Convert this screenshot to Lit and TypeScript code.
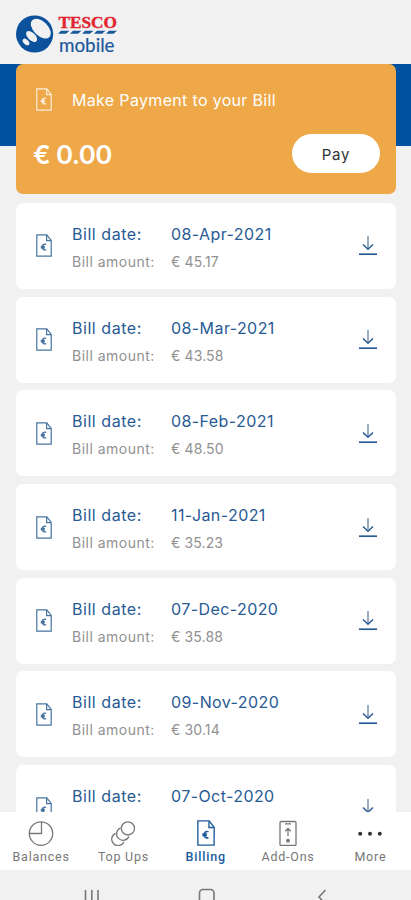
import { LitElement, html, svg, css, nothing } from "lit";
import { customElement, property } from "lit/decorators.js";

@customElement("bill-icon")
class BillIcon extends LitElement {
  static styles = css`
    :host { display: block; width: 16px; height: 23px; }
    svg { display: block; width: 100%; height: 100%; }
  `;
  render() {
    return html`<svg viewBox="0 0 16 23" fill="none" stroke="currentColor" stroke-width="1.2">
      <path d="M.8 .8H10.8L15.2 6.4V22.2H.8Z" />
      <path d="M10.6 1V6.6H15" />
      <path d="M10.2 10.4C7.8 9.6 6.3 11 6.3 13S7.8 16.4 10.2 15.6M4.8 12.4H8.8M4.8 13.7H8.8" stroke-width="1.4" />
    </svg>`;
  }
}

@customElement("bill-row")
class BillRow extends LitElement {
  @property() date = "";
  @property() amount = "";
  static styles = css`
    :host {
      display: grid; grid-template-columns: 56px 99px 1fr 18px; box-sizing: border-box;
      height: 86px; padding: 0 19px 0 0; align-items: center; flex: none;
      background: #fff; border-radius: 7px; color: #285b94;
    }
    .icon { margin-left: 20px; color: #47749f; }
    .col { display: flex; flex-direction: column; white-space: nowrap; height: 56px; padding-top: 4px; }
    .strong { font-size: 16px; line-height: 28px; letter-spacing: 0.42px; }
    .label { letter-spacing: 0.55px; }
    .soft { font-size: 14px; line-height: 28px; color: #919191; letter-spacing: 0.48px; }
    .amount { letter-spacing: 0.12px; }
    .download { display: block; width: 18px; height: 21px; }
  `;
  render() {
    return html`
      <bill-icon class="icon"></bill-icon>
      <div class="col">
        <span class="strong label">Bill date:</span>
        ${this.amount ? html`<span class="soft">Bill amount:</span>` : nothing}
      </div>
      <div class="col">
        <span class="strong">${this.date}</span>
        ${this.amount ? html`<span class="soft amount">€ ${this.amount}</span>` : nothing}
      </div>
      <svg class="download" viewBox="0 0 18 21" fill="none" stroke="currentColor">
        <path d="M9 1V14" stroke="#8199b2" stroke-width="1.6" />
        <path d="M4 9.5L9 14.2L14 9.5" stroke-width="1.5" />
        <path d="M0 19.2H18" stroke-width="1.7" />
      </svg>`;
  }
}

const bills = [
  ["08-Apr-2021", "45.17"], ["08-Mar-2021", "43.58"], ["08-Feb-2021", "48.50"],
  ["11-Jan-2021", "35.23"], ["07-Dec-2020", "35.88"], ["09-Nov-2020", "30.14"],
  ["07-Oct-2020", ""],
];

const balances = svg`<circle cx="13" cy="13.6" r="11.7" /><path d="M13.500 2V13.500H1.500" />`;
const topUps = svg`<circle cx="17.9" cy="8.4" r="6.6" />
  <path d="M10.5 8A6.4 6.4 0 1 0 18.9 16.4M5.600 13.300A6.400 6.400 0 1 0 14 21.700" />`;
const addOns = svg`<rect x="5" y="1.500" width="16" height="24" rx="1" />
  <path d="M10 3.900H16M13 16V8.500M10.200 11.300L13 8.500L15.800 11.300" /><circle cx="13" cy="20.800" r="1.300" fill="currentColor" />`;
const more = svg`<g fill="currentColor" stroke="none"><circle cx="3.2" cy="13.700" r="2" /><circle cx="13" cy="13.700" r="2" /><circle cx="22.8" cy="13.700" r="2" /></g>`;

@customElement("app-root")
class AppRoot extends LitElement {
  static styles = css`
    :host {
      display: flex; flex-direction: column; height: 900px; width: 411px; overflow: hidden;
      background: #f1f1f1; font-family: Inter, "Liberation Sans", sans-serif;
    }
    header { height: 64px; flex: none; box-sizing: border-box; padding: 12px 0 0 14px; }
    .logo { display: block; }
    .tesco { font: 700 17px "Liberation Serif", serif; fill: #e3242f; stroke: #e3242f; stroke-width: .4px; }
    .mobile { font: 400 19px Lato, sans-serif; fill: #1a589c; stroke: #1a589c; stroke-width: .2px; }
    main {
      flex: 1; min-height: 0; overflow: hidden; padding: 0 15px 0 16px;
      background: linear-gradient(#00519f 0 82.5px, #f1f1f1 82.5px);
      display: flex; flex-direction: column; gap: 7.7px;
    }
    .pay-card {
      height: 130px; flex: none; box-sizing: border-box; margin-bottom: 1.3px; background: #eea848;
      border-radius: 7px; color: #fff; padding: 24px 16px 0 17px;
    }
    .title { display: flex; align-items: center; height: 24px; font-size: 16px; letter-spacing: .33px; white-space: nowrap; }
    .title bill-icon { margin: -1px 20px 0 3px; opacity: .8; }
    .due { display: flex; justify-content: space-between; align-items: center; margin-top: 22px; height: 39px; }
    .sum { font-size: 26px; font-weight: 600; letter-spacing: -.6px; padding-top: 2px; }
    .pay {
      width: 88px; height: 39px; border: 0; border-radius: 20px; background: #fff; color: #333;
      font: 400 15px Inter, sans-serif; letter-spacing: .7px; padding: 2px 0 0;
    }
    nav { height: 58px; flex: none; background: #fff; display: grid; grid-template-columns: repeat(5, 82.3px); }
    .tab { display: flex; flex-direction: column; align-items: center; padding-top: 8px; color: #777; }
    .tab svg, .tab bill-icon { flex: none; height: 26px; }
    .tab bill-icon { width: 20px; }
    .tab svg { width: 26px; }
    .tab span { font: 400 12.5px/16px Roboto, sans-serif; letter-spacing: .78px; margin-top: 2.5px; white-space: nowrap; }
    .tab.active { color: #1c5b9c; }
    .active span { font-weight: 500; letter-spacing: .8px; }
    .dark svg { color: #333; }
    footer { height: 30px; flex: none; }
  `;
  tab(label: string, icon: unknown, cls = "") {
    return html`<div class="tab ${cls}">
      <svg viewBox="0 0 26 26" fill="none" stroke="currentColor" stroke-width="1.3">${icon}</svg><span>${label}</span></div>`;
  }
  render() {
    return html`
      <header>
        <svg class="logo" width="110" height="46" viewBox="14 12 110 46">
          <circle cx="34.6" cy="34" r="18.6" fill="#0b519c" />
          <g fill="#f1f1f1">
            <ellipse cx="40.8" cy="28.600" rx="12" ry="7.200" transform="rotate(44 40.8 28.6)" />
            <ellipse cx="31.600" cy="36.500" rx="6.800" ry="3.700" transform="rotate(44 31.6 36.5)" />
            <ellipse cx="26" cy="42" rx="4" ry="2.400" transform="rotate(44 26 42)" />
          </g>
          <text class="tesco" x="58.5" y="27.6" textLength="58.500" lengthAdjust="spacingAndGlyphs">TESCO</text>
          <path fill="#1a589c" d="M61 30.8H69.500L66 33.800H58ZM73 30.800H81.500L78 33.800H70ZM85 30.800H93.500L90 33.800H82ZM97 30.800H105.500L102 33.800H94ZM109 30.800H117L113.500 33.800H106Z" />
          <text class="mobile" x="59" y="52.300" textLength="55.500" lengthAdjust="spacingAndGlyphs">mobile</text>
        </svg>
      </header>
      <main>
        <section class="pay-card">
          <div class="title"><bill-icon></bill-icon>Make Payment to your Bill</div>
          <div class="due"><span class="sum">€ 0.00</span><button class="pay">Pay</button></div>
        </section>
        ${bills.map(([d, a]) => html`<bill-row .date=${d} .amount=${a}></bill-row>`)}
      </main>
      <nav>
        ${this.tab("Balances", balances)}
        ${this.tab("Top Ups", topUps)}
        <div class="tab active"><bill-icon></bill-icon><span>Billing</span></div>
        ${this.tab("Add-Ons", addOns)}
        ${this.tab("More", more, "dark")}
      </nav>
      <footer>
        <svg width="411" height="30" viewBox="0 0 411 30" fill="none" stroke="#777" stroke-width="1.600">
          <path d="M85.500 20V36M91.800 20V36M98 20V36M325.500 20L319 27L325.500 34" />
          <rect x="199.500" y="19.500" width="14.500" height="15" rx="3.500" />
        </svg>
      </footer>`;
  }
}
